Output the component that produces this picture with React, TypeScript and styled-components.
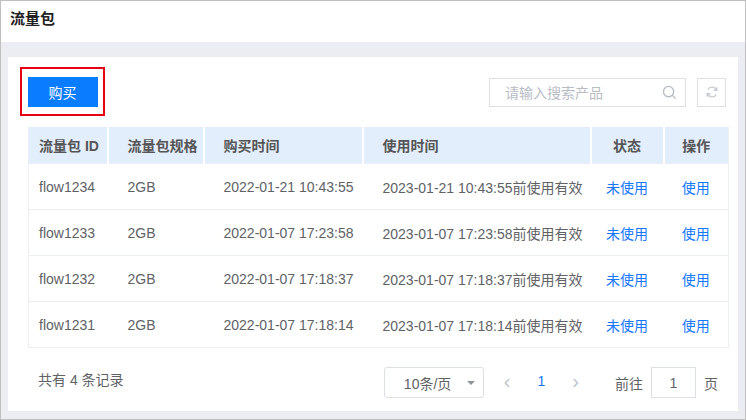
import styled, { createGlobalStyle } from "styled-components";

const GlobalStyle = createGlobalStyle`
  html, body { margin: 0; padding: 0; background: #ebedf2; }
  body { font-family: "Liberation Sans", "Noto Sans CJK SC", sans-serif; font-size: 14px; color: #606266; }
`;

const rows = [
  ["flow1234", "2GB", "2022-01-21 10:43:55", "2023-01-21 10:43:55前使用有效"],
  ["flow1233", "2GB", "2022-01-07 17:23:58", "2023-01-07 17:23:58前使用有效"],
  ["flow1232", "2GB", "2022-01-07 17:18:37", "2023-01-07 17:18:37前使用有效"],
  ["flow1231", "2GB", "2022-01-07 17:18:14", "2023-01-07 17:18:14前使用有效"],
];

const cols = [79, 96, 159, 228, 73, 65];

const Page = styled.div`
  width: 746px;
  height: 420px;
  box-sizing: border-box;
  border: 1px solid #bfbfbf;
  background: #ebedf2;
  display: flex;
  flex-direction: column;
`;

const Header = styled.div`
  height: 41px;
  background: #fff;
  padding: 6px 9px;
  box-sizing: border-box;
  font-size: 15px;
  font-weight: bold;
  color: #222;
`;

const Card = styled.div`
  margin: 15px 7px 0 7px;
  height: 354px;
  background: #fff;
  padding: 10px 12px 0 12px;
  box-sizing: border-box;
`;

const Toolbar = styled.div`
  display: flex;
  align-items: center;
  justify-content: space-between;
  height: 49px;
`;

const RedBox = styled.div`
  border: 2px solid #e60012;
  width: 85px;
  height: 49px;
  box-sizing: border-box;
  display: flex;
  align-items: center;
  justify-content: center;
`;

const BuyButton = styled.button`
  width: 70px;
  height: 30px;
  border: none;
  background: #0a7cff;
  color: #fff;
  font-family: inherit;
  font-size: 14px;
`;

const Tools = styled.div`
  display: flex;
  gap: 11px;
  align-items: center;
  margin-top: 1px;
`;

const Search = styled.div`
  width: 197px;
  height: 29px;
  box-sizing: border-box;
  border: 1px solid #dcdfe6;
  display: flex;
  align-items: center;
  justify-content: space-between;
  padding: 0 8px 0 15px;
  color: #b8bcc4;
`;

const IconBtn = styled.div`
  width: 29px;
  height: 29px;
  box-sizing: border-box;
  border: 1px solid #dcdfe6;
  display: flex;
  align-items: center;
  justify-content: center;
`;

const Table = styled.table`
  margin: 11px 0 0 8px;
  width: 700px;
  border-collapse: collapse;
  table-layout: fixed;
  border-bottom: 1px solid #ebeef5;
  border-left: 1px solid #ebeef5;
  border-right: 1px solid #ebeef5;
`;

const Th = styled.th<{ $center?: boolean }>`
  height: 36px;
  background: #e3eefc;
  border-left: 2px solid #fff;
  text-align: ${(p) => (p.$center ? "center" : "left")};
  padding: 0 0 0 19px;
  font-weight: bold;
  color: #555;
  font-size: 14px;
  &:first-child { border-left: none; padding-left: 10px; }
  ${(p) => (p.$center ? "padding: 0;" : "")}
`;

const Td = styled.td<{ $center?: boolean; $link?: boolean }>`
  height: 46px;
  box-sizing: border-box;
  border-top: 1px solid #ebeef5;
  padding: 0 0 0 20px;
  text-align: ${(p) => (p.$center ? "center" : "left")};
  color: ${(p) => (p.$link ? "#1677ff" : "#606266")};
  white-space: nowrap;
  &:first-child { padding-left: 10px; }
  ${(p) => (p.$center ? "padding: 0;" : "")}
`;

const Footer = styled.div`
  display: flex;
  align-items: center;
  margin: 19px 0 0 18px;
`;

const Total = styled.div`
  margin-top: -8px;
  flex: 1;
`;

const SizeSelect = styled.div`
  width: 100px;
  height: 31px;
  box-sizing: border-box;
  border: 1px solid #dcdfe6;
  border-radius: 3px;
  display: flex;
  align-items: center;
  justify-content: space-between;
  padding: 0 8px 0 19px;
`;

const Caret = styled.span`
  width: 0;
  height: 0;
  border-left: 4px solid transparent;
  border-right: 4px solid transparent;
  border-top: 4px solid #909399;
`;

const Pager = styled.div`
  display: flex;
  align-items: center;
  gap: 27px;
  margin: -4px 0 0 20px;
  color: #c0c4cc;
`;

const Arrow = styled.span`
  font-size: 20px;
  line-height: 1;
`;

const Current = styled.span`
  color: #1677ff;
`;

const Jump = styled.div`
  display: flex;
  align-items: center;
  gap: 8px;
  margin-left: 36px;
  margin-right: 8px;
`;

const JumpInput = styled.div`
  width: 45px;
  height: 31px;
  box-sizing: border-box;
  border: 1px solid #dcdfe6;
  display: flex;
  align-items: center;
  justify-content: center;
`;

export default function App() {
  return (
    <>
      <GlobalStyle />
      <Page>
        <Header>流量包</Header>
        <Card>
          <Toolbar>
            <RedBox>
              <BuyButton>购买</BuyButton>
            </RedBox>
            <Tools>
              <Search>
                <span>请输入搜索产品</span>
                <svg width="15" height="15" viewBox="0 0 16 16" fill="none" stroke="#b8bcc4" strokeWidth="1.4">
                  <circle cx="7" cy="7" r="5.5" />
                  <path d="M11 11l3.5 3.5" />
                </svg>
              </Search>
              <IconBtn>
                <svg width="14" height="14" viewBox="0 0 16 16" fill="none" stroke="#c8ccd2" strokeWidth="1.6">
                  <path d="M13 6A5.5 5.5 0 0 0 3.2 5" />
                  <path d="M3 10a5.5 5.5 0 0 0 9.8 1" />
                  <path d="M13.5 2.5V6H10" />
                  <path d="M2.5 13.5V10H6" />
                </svg>
              </IconBtn>
            </Tools>
          </Toolbar>
          <Table>
            <colgroup>
              {cols.map((w, i) => (
                <col key={i} style={{ width: w }} />
              ))}
            </colgroup>
            <thead>
              <tr>
                <Th>流量包 ID</Th>
                <Th>流量包规格</Th>
                <Th>购买时间</Th>
                <Th>使用时间</Th>
                <Th $center>状态</Th>
                <Th $center>操作</Th>
              </tr>
            </thead>
            <tbody>
              {rows.map((r) => (
                <tr key={r[0]}>
                  {r.map((c, i) => (
                    <Td key={i}>{c}</Td>
                  ))}
                  <Td $center $link>未使用</Td>
                  <Td $center $link>使用</Td>
                </tr>
              ))}
            </tbody>
          </Table>
          <Footer>
            <Total>共有 4 条记录</Total>
            <SizeSelect>
              <span>10条/页</span>
              <Caret />
            </SizeSelect>
            <Pager>
              <Arrow>&lsaquo;</Arrow>
              <Current>1</Current>
              <Arrow>&rsaquo;</Arrow>
            </Pager>
            <Jump>
              <span>前往</span>
              <JumpInput>1</JumpInput>
              <span>页</span>
            </Jump>
          </Footer>
        </Card>
      </Page>
    </>
  );
}
